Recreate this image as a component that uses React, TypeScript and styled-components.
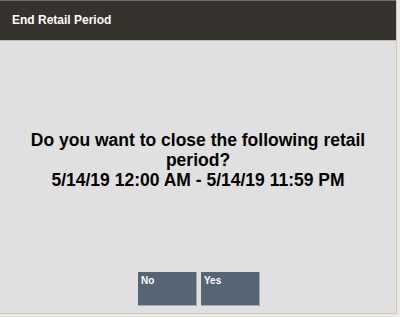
import React from "react";
import styled, { createGlobalStyle } from "styled-components";

const Global = createGlobalStyle`
  html, body { margin: 0; padding: 0; background: #ece9e6; }
  #root { width: 400px; height: 317px; }
`;

const Screen = styled.div`
  width: 400px;
  height: 317px;
  box-sizing: border-box;
  padding: 0 3px 3px 0;
  background: #ebe7e3;
  font-family: "Liberation Sans", Arial, sans-serif;
`;

const Frame = styled.div`
  height: 100%;
  box-sizing: border-box;
  display: flex;
  flex-direction: column;
  background: #e0e0e0;
  border-right: 1px solid #d3c9c1;
  border-bottom: 1px solid #d3c9c1;
`;

const Header = styled.div`
  height: 41px;
  box-sizing: border-box;
  flex: none;
  display: flex;
  align-items: center;
  padding: 0 0 1px 12px;
  background: #36332f;
  border-top: 1px solid #6f6d6a;
  border-bottom: 1px solid #bdbdbd;
  color: #ffffff;
  font-size: 12px;
  font-weight: bold;
`;

const Body = styled.div`
  flex: 1;
  display: flex;
  flex-direction: column;
  align-items: center;
`;

const Message = styled.div`
  margin-top: 89px;
  width: 350px;
  text-align: center;
  color: #000;
  font-size: 17.5px;
  font-weight: bold;
  line-height: 20px;
`;

const Buttons = styled.div`
  margin-top: auto;
  margin-bottom: 7px;
  display: flex;
  gap: 4px;
  padding-left: 2px;
`;

const Button = styled.div`
  width: 59px;
  height: 34px;
  box-sizing: border-box;
  background: #566574;
  border-right: 1px solid #a9a9a9;
  border-bottom: 1px solid #a9a9a9;
  color: #ffffff;
  font-size: 10px;
  font-weight: bold;
  padding: 3px 0 0 3px;
`;

export default function App() {
  return (
    <>
      <Global />
      <Screen>
        <Frame>
          <Header>End Retail Period</Header>
          <Body>
            <Message>
              Do you want to close the following retail period?
              <br />
              5/14/19 12:00 AM - 5/14/19 11:59 PM
            </Message>
            <Buttons>
              <Button>No</Button>
              <Button>Yes</Button>
            </Buttons>
          </Body>
        </Frame>
      </Screen>
    </>
  );
}
